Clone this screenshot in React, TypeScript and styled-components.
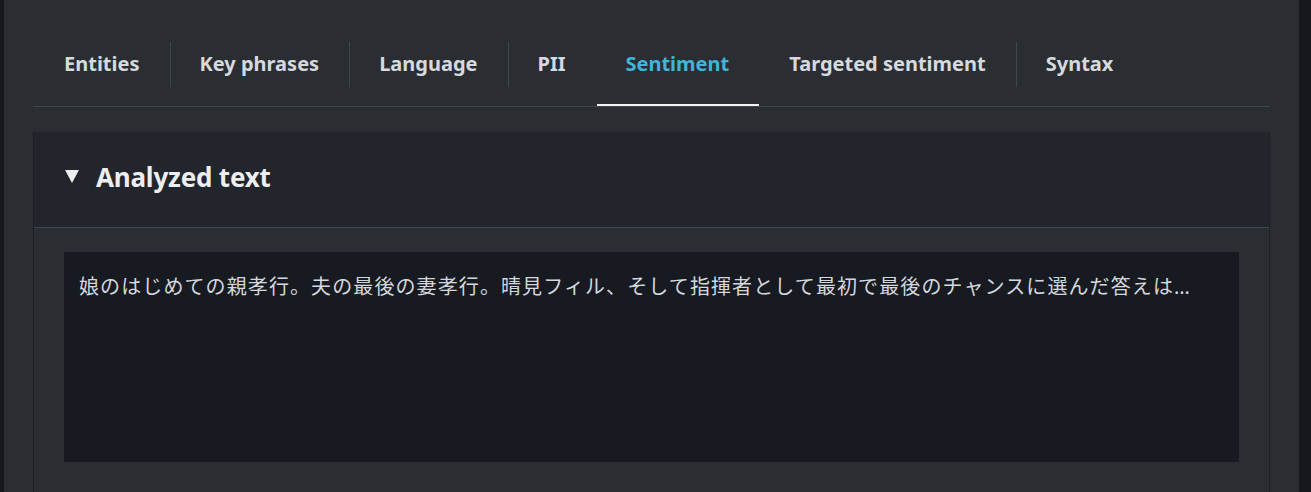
import React, { useState } from "react"
import styled, { createGlobalStyle } from "styled-components"

const GlobalStyle = createGlobalStyle`
  html, body {
    margin: 0;
    padding: 0;
    background: #16181d;
    height: 100%;
  }
  #root {
    height: 100%;
  }
  * {
    box-sizing: border-box;
  }
`

const Page = styled.div`
  height: 492px;
  padding: 0 12px 0 4px;
  font-family: "Noto Sans", "Open Sans", sans-serif;
  overflow: hidden;
`
const Panel = styled.div`
  height: 100%;
  background: #2a2d32;
  padding: 26px 29px 0 29px;
`
const TabList = styled.div`
  display: flex;
  border-bottom: 1px solid #41464e;
`
const Tab = styled.button<{ $active?: boolean }>`
  position: relative;
  height: 80px;
  padding: 0 30px 6px 31px;
  display: flex;
  align-items: center;
  background: none;
  border: none;
  font-family: inherit;
  font-size: 20px;
  font-weight: 700;
  letter-spacing: 0;
  color: ${({ $active }) => ($active ? "#42b4d9" : "#d5dadf")};
  cursor: pointer;
  & + & {
    padding-left: 30px;
  }
  & + &::before {
    content: "";
    position: absolute;
    left: 0;
    top: 16px;
    bottom: 19px;
    width: 1px;
    background: #41464e;
  }
  &::after {
    content: "";
    display: ${({ $active }) => ($active ? "block" : "none")};
    position: absolute;
    left: 2px;
    right: 0;
    bottom: 0;
    height: 2px;
    background: #f2f3f3;
  }
`
const Container = styled.section`
  margin-top: 25px;
  border-left: 1px solid #1d2025;
  border-right: 1px solid #1d2025;
  background: #2a2d32;
  height: 400px;
`
const Header = styled.div`
  height: 96px;
  display: flex;
  align-items: center;
  gap: 17px;
  padding: 0 0 6px 31px;
  background: #22252b;
  border-bottom: 1px solid #41464e;
`
const Caret = styled.svg`
  width: 14px;
  height: 13px;
  flex-shrink: 0;
`
const Title = styled.h2`
  margin: 0;
  font-size: 26px;
  font-weight: 700;
  color: #eceef0;
  letter-spacing: -0.2px;
`
const Body = styled.div`
  padding: 24px 30px 0 30px;
`
const TextArea = styled.div`
  height: 210px;
  background: #171a21;
  padding: 20px 15px;
  font-family: "Noto Sans", "Noto Sans CJK JP", sans-serif;
  font-size: 20px;
  line-height: 30px;
  letter-spacing: 1.1px;
  color: #d4d8dd;
`

const tabs = [
  "Entities",
  "Key phrases",
  "Language",
  "PII",
  "Sentiment",
  "Targeted sentiment",
  "Syntax",
]

export default function App() {
  const [active, setActive] = useState("Sentiment")
  return (
    <>
      <GlobalStyle />
      <Page>
        <Panel>
          <TabList>
            {tabs.map((t) => (
              <Tab key={t} $active={t === active} onClick={() => setActive(t)}>
                {t}
              </Tab>
            ))}
          </TabList>
          <Container>
            <Header>
              <Caret viewBox="0 0 14 13">
                <path d="M0 0 L14 0 L7 13 Z" fill="#eceef0" />
              </Caret>
              <Title>Analyzed text</Title>
            </Header>
            <Body>
              <TextArea>
                娘のはじめての親孝行。夫の最後の妻孝行。晴見フィル、そして指揮者として最初で最後のチャンスに選んだ答えは…
              </TextArea>
            </Body>
          </Container>
        </Panel>
      </Page>
    </>
  )
}
